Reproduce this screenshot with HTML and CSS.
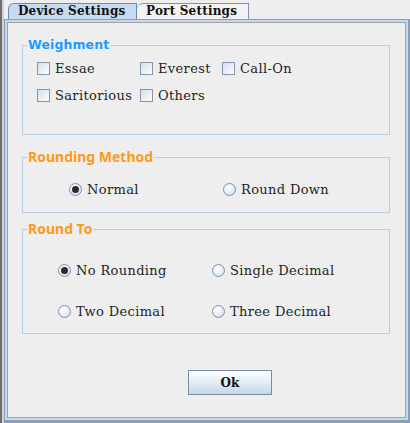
FILE: index.html
```html
<!DOCTYPE html>
<html>
<head>
<meta charset="utf-8">
<link rel="stylesheet" href="styles.css">
</head>
<body>
<div class="window">
  <div class="tabs">
    <div class="tab selected">Device Settings</div>
    <div class="tab">Port Settings</div>
  </div>
  <div class="panel">
    <fieldset class="group g1">
      <legend class="blue">Weighment</legend>
      <div class="checks">
        <label class="item"><span class="cb"></span><span>Essae</span></label>
        <label class="item"><span class="cb"></span><span>Everest</span></label>
        <label class="item"><span class="cb"></span><span>Call-On</span></label>
        <label class="item"><span class="cb"></span><span>Saritorious</span></label>
        <label class="item"><span class="cb"></span><span>Others</span></label>
      </div>
    </fieldset>
    <fieldset class="group g2">
      <legend class="orange">Rounding Method</legend>
      <div class="radios r1">
        <label class="item"><span class="rb on"></span><span>Normal</span></label>
        <label class="item"><span class="rb"></span><span>Round Down</span></label>
      </div>
    </fieldset>
    <fieldset class="group g3">
      <legend class="orange">Round To</legend>
      <div class="radios r2">
        <label class="item"><span class="rb on"></span><span>No Rounding</span></label>
        <label class="item"><span class="rb"></span><span>Single Decimal</span></label>
        <label class="item"><span class="rb"></span><span>Two Decimal</span></label>
        <label class="item"><span class="rb"></span><span>Three Decimal</span></label>
      </div>
    </fieldset>
    <div class="actions">
      <button class="btn">Ok</button>
    </div>
  </div>
</div>
</body>
</html>
```
FILE: styles.css
```css
html, body {
  margin: 0;
  padding: 0;
}
body {
  width: 410px;
  height: 423px;
  background: #eeeeee;
  overflow: hidden;
  font-family: "DejaVu Serif", serif;
  font-size: 13px;
  color: #1e1e1e;
}
.window {
  box-sizing: border-box;
  height: 423px;
  display: flex;
  flex-direction: column;
  border-left: 2px solid #6e6e6e;
  box-shadow: inset 2px 0 0 #d2d2d2;
}
.tabs {
  display: flex;
  padding: 3px 0 0 6px;
  height: 16px;
}
.tab {
  box-sizing: border-box;
  height: 16px;
  border: 1px solid #7f92b0;
  border-bottom: none;
  border-top-left-radius: 6px;
  padding: 0 8px 0 9px;
  font-weight: bold;
  font-size: 12px;
  letter-spacing: 0.2px;
  line-height: 15px;
  color: #111;
  background: #eeeeee;
}
.tab.selected {
  width: 129px;
  background: #c6daf0;
  border-color: #6d89b8;
}
.tab + .tab {
  width: 112px;
  border-left: none;
  background: #f2f2f2;
}
.panel {
  flex: 1;
  box-sizing: border-box;
  margin-left: 2px;
  border-style: solid;
  border-color: #8a9dbb;
  border-width: 1px 2px 3px 1px;
  box-shadow: inset 0 0 0 2px #c6d8eb, inset 0 0 0 3px #a3a3a3;
  padding: 17px 18px 0 17px;
}
.group {
  margin: 0;
  padding: 0;
  border: 1px solid #b8cde3;
  min-width: 0;
}
legend {
  margin-left: 4px;
  padding: 0 1px;
  line-height: 16px;
  font-weight: bold;
}
legend.blue {
  font-family: "DejaVu Sans", sans-serif;
  font-size: 12.5px;
  color: #1f9bff;
  letter-spacing: 0.1px;
}
legend.orange {
  font-family: "Noto Sans", sans-serif;
  font-size: 14px;
  color: #ff9a17;
}
.item {
  display: flex;
  align-items: center;
  gap: 4px;
  height: 13px;
  white-space: nowrap;
  letter-spacing: 0.35px;
}
.checks {
  display: grid;
  grid-template-columns: 103px 82px auto;
  row-gap: 14px;
  padding: 9px 0 32px 14px;
}
.cb {
  flex: none;
  box-sizing: border-box;
  width: 13px;
  height: 13px;
  border: 1px solid #8595ab;
  background: linear-gradient(135deg, #d3e1ef 0%, #e9f0f7 55%, #fbfdff 100%);
  margin-right: 1px;
}
.radios {
  display: grid;
  grid-template-columns: 154px auto;
}
.r1 {
  padding: 18px 0 16px 46px;
}
.r2 {
  row-gap: 28px;
  padding: 27px 0 15px 35px;
}
.g2 {
  margin-top: 14px;
}
.g3 {
  margin-top: 8px;
}
.rb {
  flex: none;
  position: relative;
  box-sizing: border-box;
  width: 13px;
  height: 13px;
  border-radius: 50%;
  border: 1px solid #8091a8;
  background: radial-gradient(circle at 40% 35%, #ffffff 0%, #eef3f9 40%, #c3d4e8 100%);
  margin-right: 1px;
}
.rb.on::after {
  content: "";
  position: absolute;
  left: 2px;
  top: 2px;
  width: 7px;
  height: 7px;
  border-radius: 50%;
  background: #2b2b2b;
}
.actions {
  padding: 36px 0 0 166px;
}
.btn {
  box-sizing: border-box;
  width: 84px;
  height: 25px;
  margin: 0;
  padding: 0;
  border: 1px solid #7a8aa2;
  border-radius: 0;
  background: linear-gradient(#fdfeff, #e6eef7 45%, #c5d6ea);
  font-family: "DejaVu Serif", serif;
  font-weight: bold;
  font-size: 12px;
  color: #111;
}
```
